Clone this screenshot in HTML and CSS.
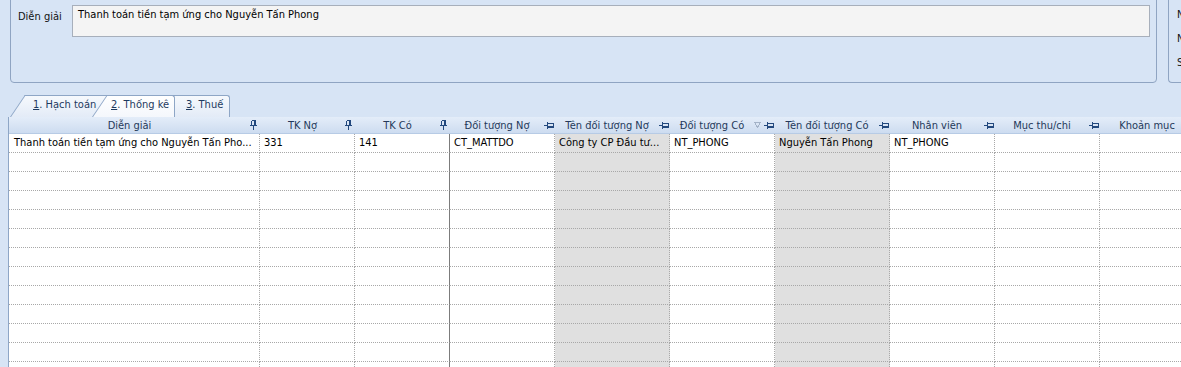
FILE: index.html
```html
<!DOCTYPE html>
<html lang="vi">
<head>
<meta charset="utf-8">
<title>Chứng từ</title>
<link rel="stylesheet" href="styles.css">
</head>
<body>
<div class="top">
  <div class="group group-main">
    <label class="field-label">Diễn giải</label>
    <div class="textbox">Thanh toán tiền tạm ứng cho Nguyễn Tấn Phong</div>
  </div>
  <div class="group group-side">
    <div class="side-label">Ngày hạch toán</div>
    <div class="side-label">Ngày chứng từ</div>
    <div class="side-label">Số chứng từ</div>
  </div>
</div>

<div class="tabs">
  <div class="tab tab-1"><u>1</u>. Hạch toán</div>
  <div class="tab tab-2 active"><u>2</u>. Thống kê</div>
  <div class="tab tab-3"><u>3</u>. Thuế</div>
</div>

<div class="grid">
  <div class="hc"><span class="t">Diễn giải</span><svg class="pin-v" width="7" height="10" viewBox="0 0 7 10"><path d="M1.5 0.5h4v5M1.5 0.5v5M4.5 1v4M0 5.5h7M3.5 6v4"/></svg></div>
  <div class="hc"><span class="t">TK Nợ</span><svg class="pin-v" width="7" height="10" viewBox="0 0 7 10"><path d="M1.5 0.5h4v5M1.5 0.5v5M4.5 1v4M0 5.5h7M3.5 6v4"/></svg></div>
  <div class="hc"><span class="t">TK Có</span><svg class="pin-v" width="7" height="10" viewBox="0 0 7 10"><path d="M1.5 0.5h4v5M1.5 0.5v5M4.5 1v4M0 5.5h7M3.5 6v4"/></svg></div>
  <div class="hc"><span class="t">Đối tượng Nợ</span><svg class="pin-h" width="10" height="7" viewBox="0 0 10 7"><path d="M0 3.5h3M3.5 0v7M3.5 1.5h6v4h-6M4 4.5h5"/></svg></div>
  <div class="hc"><span class="t">Tên đối tượng Nợ</span><svg class="pin-h" width="10" height="7" viewBox="0 0 10 7"><path d="M0 3.5h3M3.5 0v7M3.5 1.5h6v4h-6M4 4.5h5"/></svg></div>
  <div class="hc"><span class="t">Đối tượng Có</span><svg class="filter" width="7" height="6" viewBox="0 0 7 6"><path d="M0.5 0.5h6l-3 5z"/></svg><svg class="pin-h" width="10" height="7" viewBox="0 0 10 7"><path d="M0 3.5h3M3.5 0v7M3.5 1.5h6v4h-6M4 4.5h5"/></svg></div>
  <div class="hc"><span class="t">Tên đối tượng Có</span><svg class="pin-h" width="10" height="7" viewBox="0 0 10 7"><path d="M0 3.5h3M3.5 0v7M3.5 1.5h6v4h-6M4 4.5h5"/></svg></div>
  <div class="hc"><span class="t">Nhân viên</span><svg class="pin-h" width="10" height="7" viewBox="0 0 10 7"><path d="M0 3.5h3M3.5 0v7M3.5 1.5h6v4h-6M4 4.5h5"/></svg></div>
  <div class="hc"><span class="t">Mục thu/chi</span><svg class="pin-h" width="10" height="7" viewBox="0 0 10 7"><path d="M0 3.5h3M3.5 0v7M3.5 1.5h6v4h-6M4 4.5h5"/></svg></div>
  <div class="hc"><span class="t">Khoản mục</span><svg class="pin-h" width="10" height="7" viewBox="0 0 10 7"><path d="M0 3.5h3M3.5 0v7M3.5 1.5h6v4h-6M4 4.5h5"/></svg></div>

  <div class="c first">Thanh toán tiền tạm ứng cho Nguyễn Tấn Pho...</div><div class="c">331</div><div class="c fz">141</div><div class="c">CT_MATTDO</div><div class="c sh">Công ty CP Đầu tư...</div><div class="c">NT_PHONG</div><div class="c sh">Nguyễn Tấn Phong</div><div class="c">NT_PHONG</div><div class="c"></div><div class="c"></div>

  <div class="c first"></div><div class="c"></div><div class="c fz"></div><div class="c"></div><div class="c sh"></div><div class="c"></div><div class="c sh"></div><div class="c"></div><div class="c"></div><div class="c"></div>
  <div class="c first"></div><div class="c"></div><div class="c fz"></div><div class="c"></div><div class="c sh"></div><div class="c"></div><div class="c sh"></div><div class="c"></div><div class="c"></div><div class="c"></div>
  <div class="c first"></div><div class="c"></div><div class="c fz"></div><div class="c"></div><div class="c sh"></div><div class="c"></div><div class="c sh"></div><div class="c"></div><div class="c"></div><div class="c"></div>
  <div class="c first"></div><div class="c"></div><div class="c fz"></div><div class="c"></div><div class="c sh"></div><div class="c"></div><div class="c sh"></div><div class="c"></div><div class="c"></div><div class="c"></div>
  <div class="c first"></div><div class="c"></div><div class="c fz"></div><div class="c"></div><div class="c sh"></div><div class="c"></div><div class="c sh"></div><div class="c"></div><div class="c"></div><div class="c"></div>
  <div class="c first"></div><div class="c"></div><div class="c fz"></div><div class="c"></div><div class="c sh"></div><div class="c"></div><div class="c sh"></div><div class="c"></div><div class="c"></div><div class="c"></div>
  <div class="c first"></div><div class="c"></div><div class="c fz"></div><div class="c"></div><div class="c sh"></div><div class="c"></div><div class="c sh"></div><div class="c"></div><div class="c"></div><div class="c"></div>
  <div class="c first"></div><div class="c"></div><div class="c fz"></div><div class="c"></div><div class="c sh"></div><div class="c"></div><div class="c sh"></div><div class="c"></div><div class="c"></div><div class="c"></div>
  <div class="c first"></div><div class="c"></div><div class="c fz"></div><div class="c"></div><div class="c sh"></div><div class="c"></div><div class="c sh"></div><div class="c"></div><div class="c"></div><div class="c"></div>
  <div class="c first"></div><div class="c"></div><div class="c fz"></div><div class="c"></div><div class="c sh"></div><div class="c"></div><div class="c sh"></div><div class="c"></div><div class="c"></div><div class="c"></div>
  <div class="c first"></div><div class="c"></div><div class="c fz"></div><div class="c"></div><div class="c sh"></div><div class="c"></div><div class="c sh"></div><div class="c"></div><div class="c"></div><div class="c"></div>
  <div class="c first"></div><div class="c"></div><div class="c fz"></div><div class="c"></div><div class="c sh"></div><div class="c"></div><div class="c sh"></div><div class="c"></div><div class="c"></div><div class="c"></div>
</div>
</body>
</html>
```

FILE: styles.css
```css
* {
  box-sizing: border-box;
}

html,
body {
  margin: 0;
  height: 100%;
  overflow: hidden;
}

body {
  background: #d7e4f5;
  font-family: "DejaVu Sans Condensed", "DejaVu Sans", sans-serif;
  font-size: 11px;
  color: #000;
}

/* ---------- top group boxes ---------- */
.top {
  display: flex;
  margin-top: -6px;
  height: 89px;
}

.group {
  height: 89px;
  border: 1px solid #8fa4c2;
  border-radius: 4px;
}

.group-main {
  width: 1147px;
  margin-left: 10px;
  display: flex;
  align-items: flex-start;
  padding: 10px 6px 0 7px;
}

.field-label {
  width: 54px;
  flex: none;
  margin-top: 5px;
  line-height: 13px;
  color: #111;
}

.textbox {
  flex: 1;
  height: 32px;
  border: 1px solid #a7afbb;
  background: #f4f4f4;
  padding: 2px 5px;
  line-height: 13px;
  white-space: nowrap;
}

.group-side {
  flex: 1;
  margin-left: 11px;
  border-right: none;
  border-radius: 4px 0 0 4px;
  padding: 8px 0 0 8px;
  overflow: hidden;
}

.side-label {
  line-height: 24px;
  white-space: nowrap;
  color: #111;
}

/* ---------- tabs ---------- */
.tabs {
  display: flex;
  margin-top: 12px;
  height: 22px;
  padding-left: 25px;
}

.tab {
  position: relative;
  height: 22px;
  border-top: 1px solid #8ea6c6;
  border-right: 1px solid #8ea6c6;
  border-top-right-radius: 3px;
  background: linear-gradient(#f6f9fd, #e3ebf7);
  color: #1e3a5f;
  padding-top: 2px;
  line-height: 14px;
  white-space: nowrap;
}

.tab::before {
  content: "";
  position: absolute;
  left: -15px;
  top: -1px;
  bottom: 0;
  width: 20px;
  background: inherit;
  border-left: 1px solid #8ea6c6;
  border-top: 1px solid #8ea6c6;
  transform-origin: left bottom;
  transform: skewX(-34deg);
  z-index: -1;
}

.tab u {
  text-decoration: underline;
}

.tab-1 {
  width: 90px;
  padding-left: 8px;
  z-index: 1;
}

.tab-2 {
  width: 68px;
  margin-left: -8px;
  padding-left: 4px;
  z-index: 3;
}

.tab-3 {
  width: 60px;
  margin-left: -5px;
  padding-left: 16px;
  z-index: 2;
}

.tab.active {
  background: linear-gradient(#ffffff, #f4f7fc);
}

/* ---------- grid ---------- */
.grid {
  display: grid;
  grid-template-columns: 251px 95px 95px 105px 115px 105px 115px 105px 105px 105px;
  width: max-content;
  margin-left: 8px;
  border-left: 1px solid #8ea6c6;
  background: #fff;
}

.hc {
  height: 17px;
  display: flex;
  align-items: center;
  background: linear-gradient(#e4edf9, #cddcf0);
  border-bottom: 1px solid #b7cbe5;
  color: #24395a;
  white-space: nowrap;
}

.hc .t {
  flex: 1;
  text-align: center;
}

.hc svg {
  flex: none;
  fill: none;
  shape-rendering: crispEdges;
}

.pin-v {
  stroke: #23497e;
  margin-right: 3px;
}

.pin-h {
  stroke: #23497e;
  margin-right: 1px;
}

.filter {
  stroke: #a4b3c8;
  margin-right: 3px;
}

.c {
  height: 19px;
  padding-left: 4px;
  line-height: 18px;
  border-right: 1px dotted #a8a8a8;
  border-bottom: 1px dotted #a8a8a8;
  white-space: nowrap;
  overflow: hidden;
}

.c.first {
  padding-left: 5px;
}

.c.sh {
  background: #e0e0e0;
}

.c.fz {
  border-right: 1px solid #7c7c7c;
}
```
